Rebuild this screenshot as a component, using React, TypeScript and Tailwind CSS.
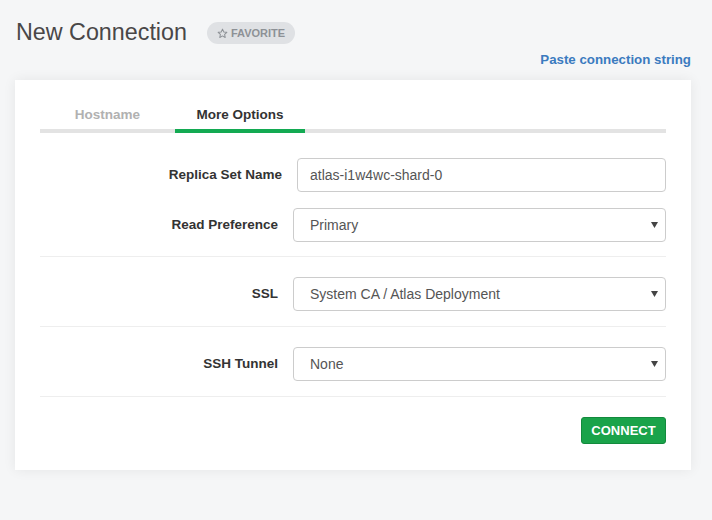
import React from "react";

const font = { fontFamily: '"Liberation Sans", Arial, sans-serif' };

function Caret() {
  return (
    <svg width="7" height="6" viewBox="0 0 7 6" className="absolute right-[7px] top-1/2 -translate-y-1/2">
      <path d="M0 0h7L3.5 6z" fill="#444" />
    </svg>
  );
}

function SelectRow({ label, value }: { label: string; value: string }) {
  return (
    <div className="flex items-center">
      <div className="w-[238px] text-right text-[13.5px] font-bold text-[#333]">{label}</div>
      <div className="relative ml-[15px] flex h-[34px] flex-1 items-center rounded-[4px] border border-[#ccc] bg-white pl-[16px] text-[14px] text-[#555]">
        {value}
        <Caret />
      </div>
    </div>
  );
}

export default function App() {
  return (
    <div className="min-h-[520px] bg-[#f5f6f7] pl-[15px] pr-[21px] pt-[16px]" style={font}>
      {/* Header */}
      <div className="flex items-center">
        <h1 className="pl-[1px] text-[23.3px] leading-[32px] text-[#494747]">New Connection</h1>
        <div className="ml-[20px] mt-[2px] flex h-[22px] items-center gap-[3px] rounded-full bg-[#dfe1e4] px-[10px] text-[11px] font-bold text-[#8d9196]">
          <svg width="11" height="11" viewBox="0 0 24 24" fill="none" stroke="#8d9196" strokeWidth="2.2" strokeLinejoin="round">
            <path d="M12 2.5l2.9 6.1 6.6.8-4.9 4.6 1.3 6.6L12 17.3l-5.9 3.3 1.3-6.6-4.9-4.6 6.6-.8z" />
          </svg>
          FAVORITE
        </div>
      </div>
      <div className="mt-[2px] flex justify-end text-[13.3px] font-bold leading-[20px] text-[#3b7bbf]">
        <span>Paste connection string</span>
      </div>

      {/* Card */}
      <div className="mt-[10px] bg-white px-[25px] pb-[26px] pt-[22px] shadow-[0_0_12px_rgba(0,0,0,0.07)]">
        <div className="flex border-b-4 border-[#e3e3e3]">
          <div className="-mb-[4px] flex h-[31px] w-[135px] items-start justify-center border-b-4 border-transparent pt-[3px] text-[13.5px] font-bold text-[#b1b1b1]">
            Hostname
          </div>
          <div className="-mb-[4px] flex h-[31px] w-[130px] items-start justify-center border-b-4 border-[#13aa52] pt-[3px] text-[13.5px] font-bold text-[#333]">
            More Options
          </div>
        </div>

        <div className="mt-[25px] flex items-center pl-[4px]">
          <div className="w-[238px] text-right text-[13.5px] font-bold text-[#333]">Replica Set Name</div>
          <div className="ml-[15px] flex h-[34px] flex-1 items-center rounded-[4px] border border-[#ccc] bg-white pl-[12px] text-[14px] text-[#555]">
            atlas-i1w4wc-shard-0
          </div>
        </div>
        <div className="mt-[16px]">
          <SelectRow label="Read Preference" value="Primary" />
        </div>
        <div className="mt-[14px] border-t border-[#eee]" />

        <div className="mt-[20px]">
          <SelectRow label="SSL" value="System CA / Atlas Deployment" />
        </div>
        <div className="mt-[15px] border-t border-[#eee]" />

        <div className="mt-[20px]">
          <SelectRow label="SSH Tunnel" value="None" />
        </div>
        <div className="mt-[15px] border-t border-[#eee]" />

        <div className="mt-[20px] flex justify-end">
          <button className="h-[27px] w-[85px] rounded-[3px] border border-[#138a3d] bg-[#1aa34a] text-[13px] font-bold text-white">
            CONNECT
          </button>
        </div>
      </div>
    </div>
  );
}
